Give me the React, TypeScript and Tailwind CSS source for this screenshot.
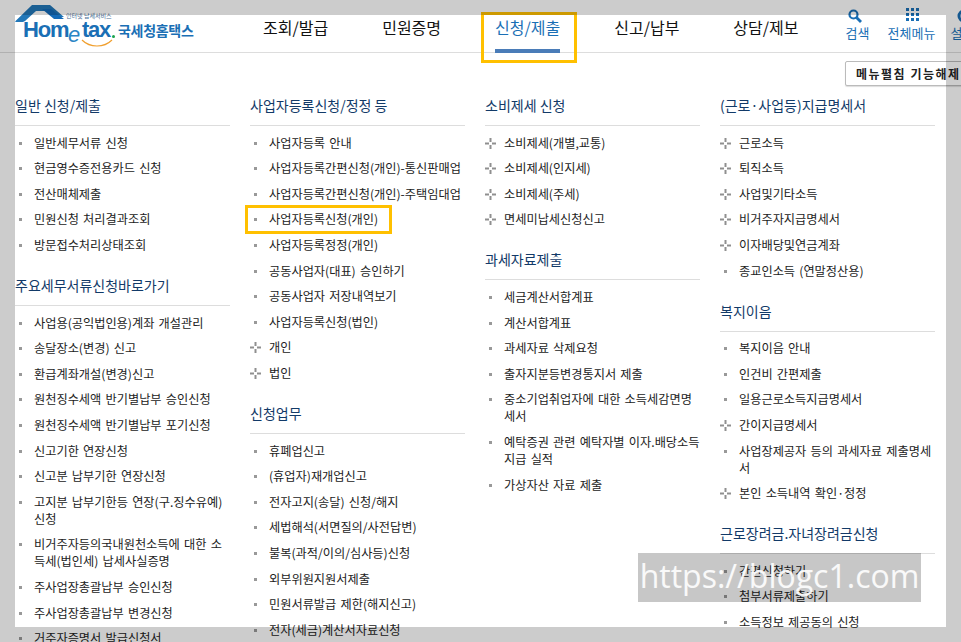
type Item = { label: string; plus?: boolean };
type Section = { title: string; items: Item[] };

const KR = "font-['Noto_Sans_CJK_KR','Noto_Sans',sans-serif]";

const columns: Section[][] = [
  [
    {
      title: '일반 신청/제출',
      items: [
        { label: '일반세무서류 신청' },
        { label: '현금영수증전용카드 신청' },
        { label: '전산매체제출' },
        { label: '민원신청 처리결과조회' },
        { label: '방문접수처리상태조회' },
      ],
    },
    {
      title: '주요세무서류신청바로가기',
      items: [
        { label: '사업용(공익법인용)계좌 개설관리' },
        { label: '송달장소(변경) 신고' },
        { label: '환급계좌개설(변경)신고' },
        { label: '원천징수세액 반기별납부 승인신청' },
        { label: '원천징수세액 반기별납부 포기신청' },
        { label: '신고기한 연장신청' },
        { label: '신고분 납부기한 연장신청' },
        { label: '고지분 납부기한등 연장(구.징수유예) 신청' },
        { label: '비거주자등의국내원천소득에 대한 소득세(법인세) 납세사실증명' },
        { label: '주사업장총괄납부 승인신청' },
        { label: '주사업장총괄납부 변경신청' },
        { label: '거주자증명서 발급신청서' },
      ],
    },
  ],
  [
    {
      title: '사업자등록신청/정정 등',
      items: [
        { label: '사업자등록 안내' },
        { label: '사업자등록간편신청(개인)-통신판매업' },
        { label: '사업자등록간편신청(개인)-주택임대업' },
        { label: '사업자등록신청(개인)' },
        { label: '사업자등록정정(개인)' },
        { label: '공동사업자(대표) 승인하기' },
        { label: '공동사업자 저장내역보기' },
        { label: '사업자등록신청(법인)' },
        { label: '개인', plus: true },
        { label: '법인', plus: true },
      ],
    },
    {
      title: '신청업무',
      items: [
        { label: '휴폐업신고' },
        { label: '(휴업자)재개업신고' },
        { label: '전자고지(송달) 신청/해지' },
        { label: '세법해석(서면질의/사전답변)' },
        { label: '불복(과적/이의/심사등)신청' },
        { label: '외부위원지원서제출' },
        { label: '민원서류발급 제한(해지신고)' },
        { label: '전자(세금)계산서자료신청' },
      ],
    },
  ],
  [
    {
      title: '소비제세 신청',
      items: [
        { label: '소비제세(개별,교통)', plus: true },
        { label: '소비제세(인지세)', plus: true },
        { label: '소비제세(주세)', plus: true },
        { label: '면세미납세신청신고', plus: true },
      ],
    },
    {
      title: '과세자료제출',
      items: [
        { label: '세금계산서합계표' },
        { label: '계산서합계표' },
        { label: '과세자료 삭제요청' },
        { label: '출자지분등변경통지서 제출' },
        { label: '중소기업취업자에 대한 소득세감면명세서' },
        { label: '예탁증권 관련 예탁자별 이자.배당소득 지급 실적' },
        { label: '가상자산 자료 제출' },
      ],
    },
  ],
  [
    {
      title: '(근로·사업등)지급명세서',
      items: [
        { label: '근로소득', plus: true },
        { label: '퇴직소득', plus: true },
        { label: '사업및기타소득', plus: true },
        { label: '비거주자지급명세서', plus: true },
        { label: '이자배당및연금계좌', plus: true },
        { label: '종교인소득 (연말정산용)' },
      ],
    },
    {
      title: '복지이음',
      items: [
        { label: '복지이음 안내' },
        { label: '인건비 간편제출' },
        { label: '일용근로소득지급명세서' },
        { label: '간이지급명세서', plus: true },
        { label: '사업장제공자 등의 과세자료 제출명세서' },
        { label: '본인 소득내역 확인·정정', plus: true },
      ],
    },
    {
      title: '근로장려금.자녀장려금신청',
      items: [
        { label: '간편신청하기' },
        { label: '첨부서류제출하기' },
        { label: '소득정보 제공동의 신청' },
      ],
    },
  ],
];

const navItems = ['조회/발급', '민원증명', '신청/제출', '신고/납부', '상담/제보'];

function PlusMark() {
  return (
    <svg width="11" height="11" viewBox="0 0 11 11" className="absolute left-[-19px] top-[3px]">
      <path d="M5.5 0v4M5.5 7v4M0 5.5h4M7 5.5h4" stroke="#8f8f8f" strokeWidth="2" fill="none" />
    </svg>
  );
}

function MenuRow({ item }: { item: Item }) {
  const highlighted = item.label === '사업자등록신청(개인)';
  return (
    <li className="relative mt-[8.6px] text-[12.2px] leading-[17px] [word-spacing:1.5px] text-[#222]">
      {item.plus ? <PlusMark /> : <span className="absolute left-[-15px] top-[7px] size-[3px] bg-[#999]" />}
      {item.label}
      {highlighted && (
        <span className="absolute left-[-24px] top-[-6px] h-[29px] w-[147px] border-[3px] border-[#ffc000]" />
      )}
    </li>
  );
}

function MenuSection({ section }: { section: Section }) {
  return (
    <section className="mb-[21px]">
      <h3 className="border-b border-[#ddd] pb-[10px] text-[14px] leading-[20px] font-normal text-[#123a68]">
        {section.title}
      </h3>
      <ul className="mt-[2px] pl-[19px]">
        {section.items.map((item) => (
          <MenuRow key={item.label} item={item} />
        ))}
      </ul>
    </section>
  );
}

function Logo() {
  return (
    <div className="relative h-full w-[200px] shrink-0">
      <svg width="50" height="18" viewBox="0 0 50 18" className="absolute left-[15px] top-[5px]">
        <path d="M0 16.5 L17 0 H35 L49 12 H38 L31 6 H21 L10 16 L8 17 H1 Z" fill="#2277b8" />
        <path d="M27 4 H36 L49 14 L39 14 Z" fill="#136ab8" />
      </svg>
      <span className="absolute left-[23px] top-[17px] font-['Liberation_Sans',sans-serif] text-[22px] leading-[26px] font-bold tracking-[-1.2px] text-[#1a6fb5]">
        Hom
      </span>
      <span className="absolute left-[68px] top-[22px] font-['Liberation_Sans',sans-serif] text-[22px] leading-[26px] italic text-[#2b86c5]">
        e
      </span>
      <span className="absolute left-[82px] top-[17px] font-['Liberation_Sans',sans-serif] text-[22px] leading-[26px] font-bold tracking-[-1.3px] text-[#1a6fb5]">
        tax
      </span>
      <span className="absolute left-[112px] top-[35px] size-[3px] rounded-full bg-[#1aa34a]" />
      <svg width="32" height="8" viewBox="0 0 32 8" className="absolute left-[81px] top-[39px]">
        <path d="M1 1 C9 9 23 9 31 1" stroke="#f0a030" strokeWidth="1.2" fill="none" />
      </svg>
      <span className="absolute left-[66px] top-[12px] text-[6px] leading-[8px] whitespace-nowrap text-[#4a6f96]">
        인터넷 납세서비스
      </span>
      <span className="absolute left-[118px] top-[20px] text-[14px] leading-[20px] font-bold tracking-[-0.3px] whitespace-nowrap text-[#1a6fb5]">
        국세청홈택스
      </span>
    </div>
  );
}

function SearchIcon() {
  return (
    <svg width="14" height="14" viewBox="0 0 14 14" fill="none" stroke="#1a6fb5">
      <circle cx="5.5" cy="5.5" r="4" strokeWidth="2.2" />
      <path d="M8.5 8.5 L13 13" strokeWidth="2.8" />
    </svg>
  );
}

function GridIcon() {
  return (
    <svg width="13" height="13" viewBox="0 0 13 13" fill="#1a6fb5">
      {[0, 5, 10].map((y) =>
        [0, 5, 10].map((x) => <rect key={`${x}-${y}`} x={x} y={y} width="3" height="3" />)
      )}
    </svg>
  );
}

export default function App() {
  return (
    <div className={`relative h-[642px] w-[961px] overflow-hidden bg-white ${KR}`}>
      <header className="flex h-[53px] border-b border-[#ddd]">
        <Logo />
        <nav className="ml-[36px] flex shrink-0">
          {navItems.map((nav) => {
            const active = nav === '신청/제출';
            return (
              <div key={nav} className="relative px-[27px] pt-[15px] whitespace-nowrap">
                <span
                  className={
                    active
                      ? 'inline-block border-b-4 border-[#4a7cb8] pb-[11px] text-[16px] leading-[22px] text-[#1a6fb5]'
                      : 'text-[16px] leading-[22px] text-[#111]'
                  }
                >
                  {nav}
                </span>
                {active && (
                  <span className="absolute left-[13px] top-[12px] h-[51px] w-[96px] border-[3px] border-[#ffc000]" />
                )}
              </div>
            );
          })}
        </nav>
        <div className="ml-[20px] flex shrink-0 text-[13px] leading-[16px] text-[#1a6fb5]">
          <div className="flex w-[24px] flex-col pt-[9px]">
            <div className="ml-[2px] h-[16px]">
              <SearchIcon />
            </div>
            <span className="whitespace-nowrap">검색</span>
          </div>
          <div className="ml-[18px] flex w-[48px] flex-col items-center pt-[8px]">
            <div className="ml-[2px] h-[17px]">
              <GridIcon />
            </div>
            <span className="whitespace-nowrap">전체메뉴</span>
          </div>
          <div className="ml-[15px] flex flex-col pt-[9px]">
            <div className="ml-[6px] h-[16px]">
              <svg width="14" height="14" viewBox="0 0 14 14" fill="none" stroke="#1a6fb5" strokeWidth="3">
                <circle cx="7" cy="7" r="5" />
              </svg>
            </div>
            <span className="whitespace-nowrap">설정</span>
          </div>
        </div>
      </header>

      <div className="flex pt-[8px] pl-[845px]">
        <button className="h-[25px] w-[150px] shrink-0 rounded-[2px] border border-[#bbb] bg-white pl-[10px] text-left text-[12px] leading-[22px] font-bold tracking-[1.5px] whitespace-nowrap text-[#222] shadow-[0_1px_1px_#ddd]">
          메뉴펼침 기능해제
        </button>
      </div>

      <main className="mt-[9px] grid h-[600px] grid-cols-[215px_215px_215px_215px] gap-x-[20px] pl-[15px]">
        {columns.map((sections) => (
          <div key={sections[0].title}>
            {sections.map((section) => (
              <MenuSection key={section.title} section={section} />
            ))}
          </div>
        ))}
      </main>

      {/* capture frame dimming the edges */}
      <div className="pointer-events-none absolute inset-0 border-[15px] border-black/20" />

      {/* blog watermark */}
      <div className="pointer-events-none absolute left-[638px] top-[553px] h-[49px] w-[283px] bg-black/[0.22] text-center font-['Open_Sans',sans-serif] text-[32px] leading-[46px] whitespace-nowrap text-white/90">
        https://blogc1.com
      </div>
    </div>
  );
}
